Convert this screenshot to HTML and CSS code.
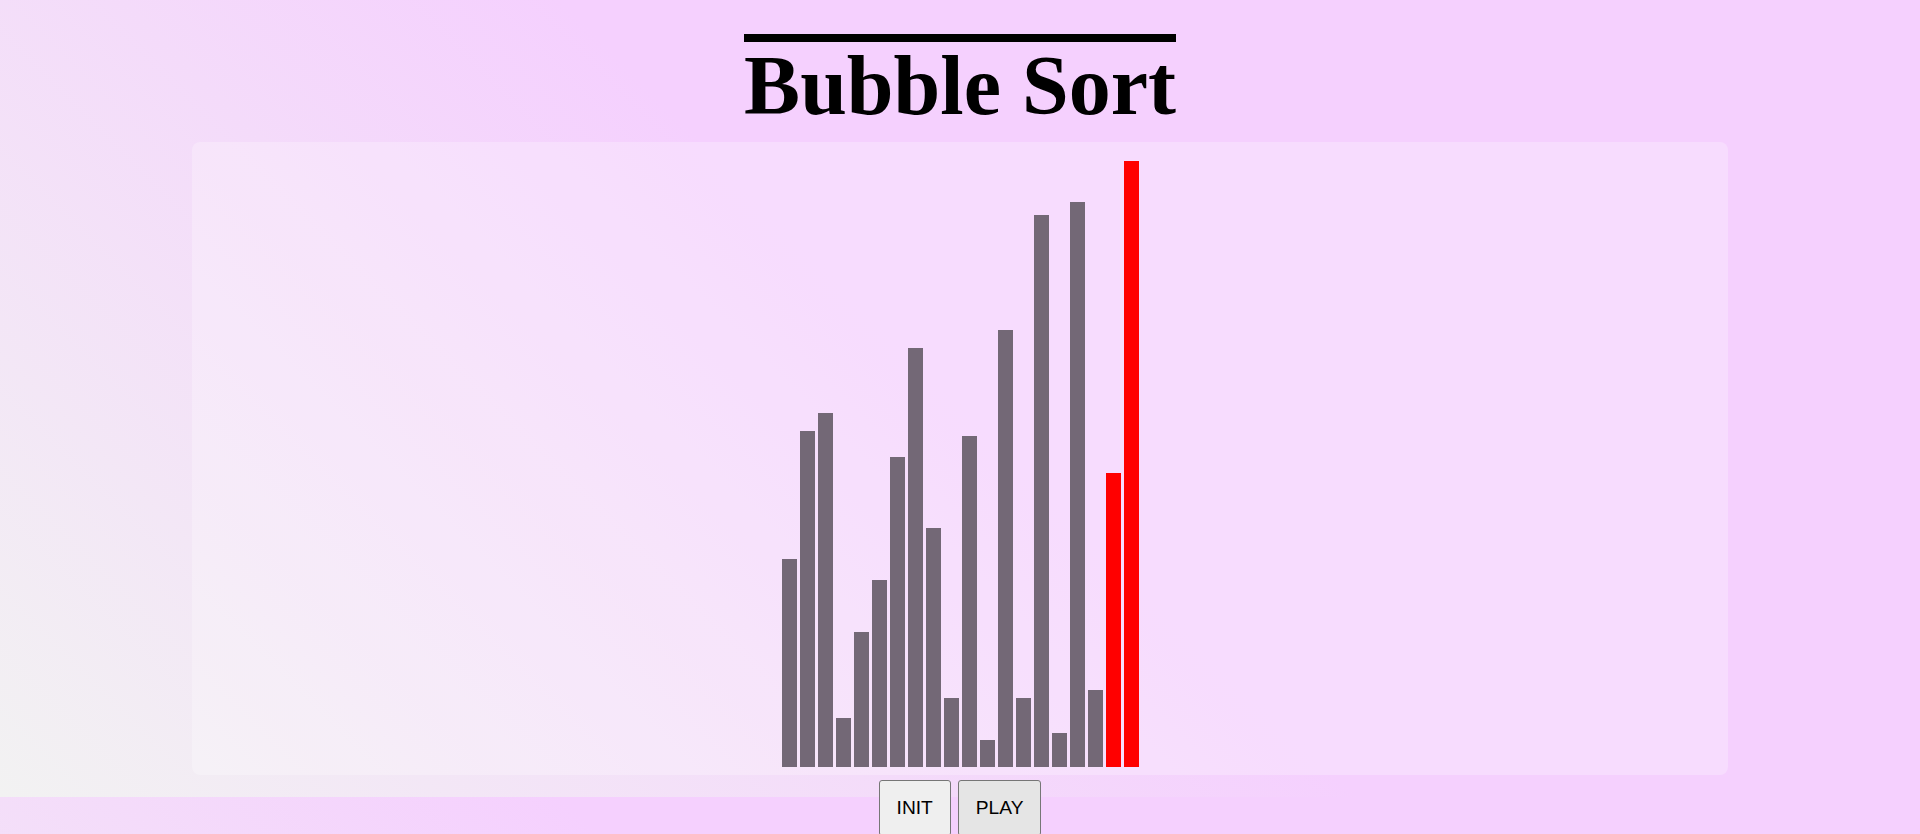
FILE: index.html
```html
<!DOCTYPE html>
<html lang="en">
<head>
<meta charset="utf-8">
<title>Bubble Sort</title>
<link rel="stylesheet" href="styles.css">
</head>
<body>
  <header class="header">
    <h1 class="title">Bubble Sort</h1>
  </header>
  <main class="stage">
    <div class="bars">
      <div class="bar" style="height:208px"></div>
      <div class="bar" style="height:336px"></div>
      <div class="bar" style="height:354px"></div>
      <div class="bar" style="height:49px"></div>
      <div class="bar" style="height:135px"></div>
      <div class="bar" style="height:187px"></div>
      <div class="bar" style="height:310px"></div>
      <div class="bar" style="height:419px"></div>
      <div class="bar" style="height:239px"></div>
      <div class="bar" style="height:69px"></div>
      <div class="bar" style="height:331px"></div>
      <div class="bar" style="height:27px"></div>
      <div class="bar" style="height:437px"></div>
      <div class="bar" style="height:69px"></div>
      <div class="bar" style="height:552px"></div>
      <div class="bar" style="height:34px"></div>
      <div class="bar" style="height:565px"></div>
      <div class="bar" style="height:77px"></div>
      <div class="bar bar--active" style="height:294px"></div>
      <div class="bar bar--active" style="height:606px"></div>
    </div>
  </main>
  <div class="controls">
    <button class="btn" type="button">INIT</button>
    <button class="btn btn--hover" type="button">PLAY</button>
  </div>
</body>
</html>
```
FILE: styles.css
```css
html {
  background: linear-gradient(45deg, #f2f2f2 0%, #f5d0fe 50%);
  background-size: 100% 797px;
  background-repeat: repeat;
}

body {
  margin: 0;
  display: flex;
  flex-direction: column;
  align-items: center;
}

.header {
  display: flex;
  justify-content: center;
  padding-top: 34px;
  margin-bottom: 12px;
}

.title {
  margin: 0;
  border-top: 8px solid #000;
  font-family: "Liberation Serif", "Times New Roman", serif;
  font-weight: bold;
  font-size: 84px;
  line-height: 88px;
  color: #000;
}

.stage {
  width: 80%;
  height: 633px;
  box-sizing: border-box;
  padding-bottom: 8px;
  background: rgba(255, 255, 255, 0.25);
  border-radius: 8px;
  display: flex;
  align-items: flex-end;
  justify-content: center;
}

.bars {
  display: flex;
  align-items: flex-end;
  gap: 3px;
}

.bar {
  width: 15px;
  background: #736876;
}

.bar--active {
  background: #ff0000;
}

.controls {
  display: flex;
  gap: 7px;
  margin-top: 5px;
}

.btn {
  font-family: "Liberation Sans", Arial, sans-serif;
  font-size: 19.2px;
  line-height: normal;
  padding: 16px 17px;
  border: 1px solid #767676;
  border-radius: 3px;
  background: #efefef;
  color: #000;
}

.btn--hover {
  background: #e5e5e5;
}
```
